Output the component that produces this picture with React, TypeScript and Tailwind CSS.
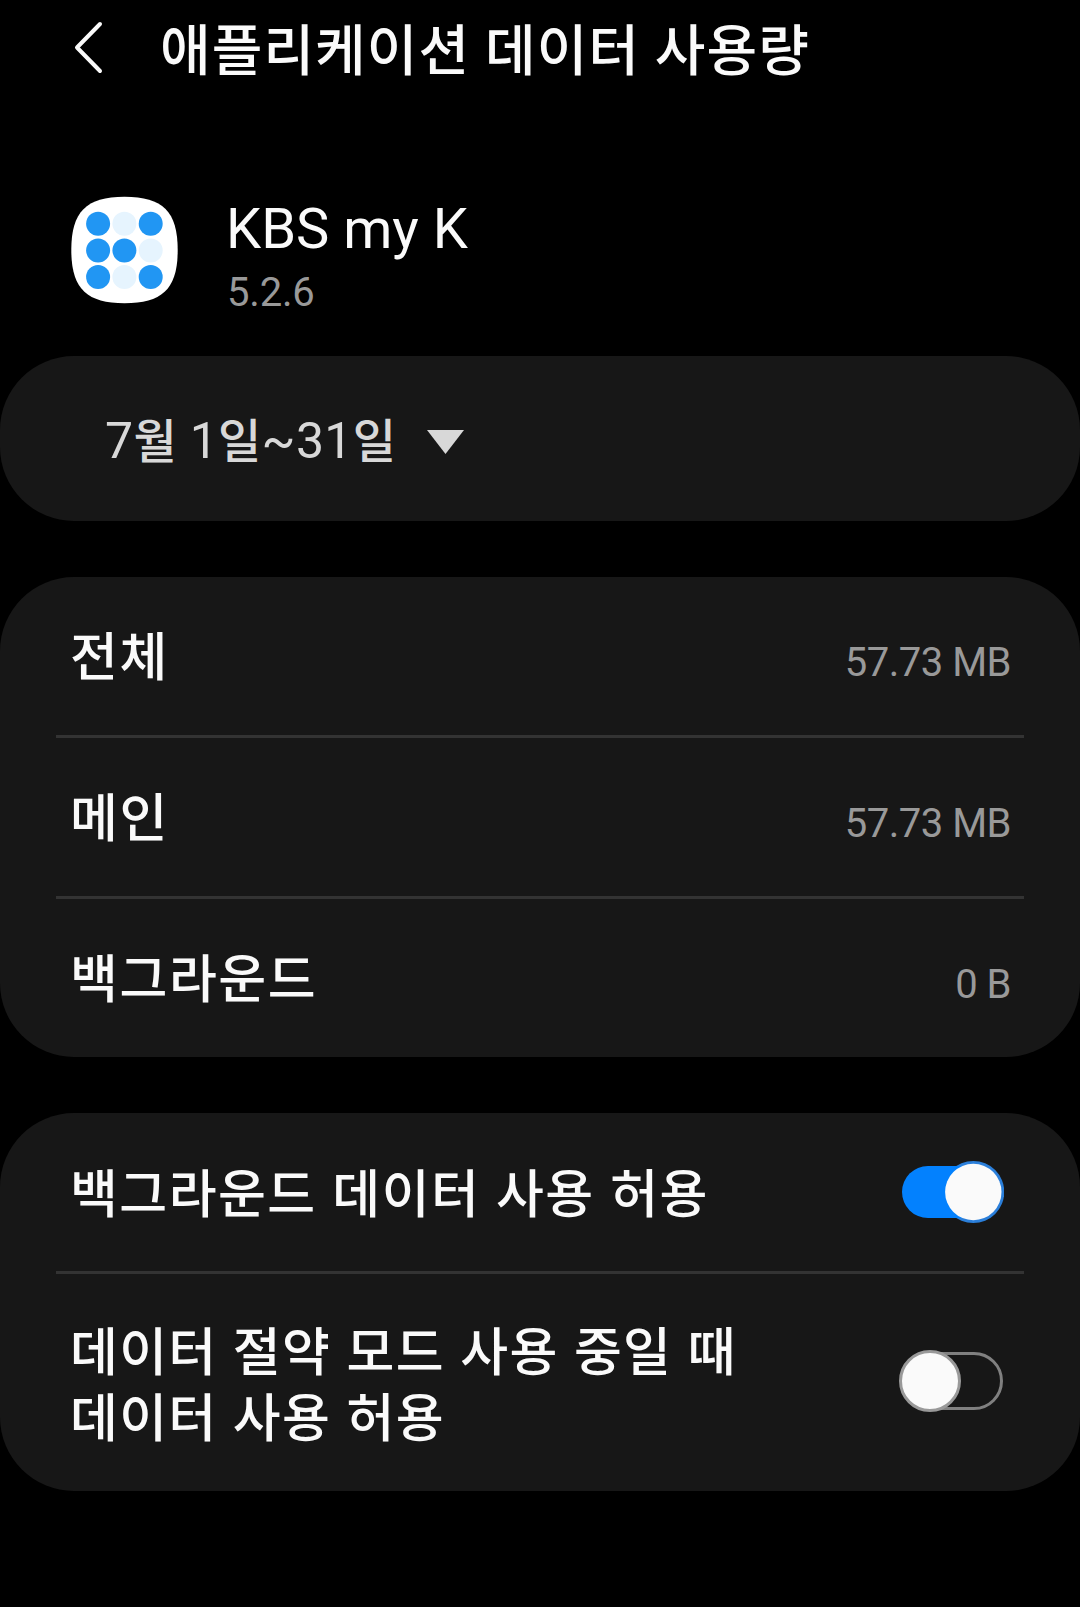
import React, { useState } from 'react';

interface SwitchProps {
  checked: boolean;
  label: string;
  onChange: () => void;
}

const Switch: React.FC<SwitchProps> = ({ checked, label, onChange }) => (
  <button type="button" role="switch" aria-checked={checked} aria-label={label} onClick={onChange} className="shrink-0">
    <svg width="106" height="64" viewBox="0 0 106 64" fill="none">
      {checked ? (
        <>
          <circle cx="75.3" cy="32" r="31" fill="#2b7fda" />
          <path d="M72 6H30A26 26 0 0 0 30 58H72Z" fill="#0381fe" />
          <circle cx="75.3" cy="32" r="28.2" fill="#fafafa" />
        </>
      ) : (
        <>
          <rect x="6" y="4.5" width="97.5" height="55" rx="27.5" stroke="#808080" strokeWidth="3" />
          <circle cx="32" cy="32" r="29.5" fill="#fafafa" stroke="#999999" strokeWidth="3" />
        </>
      )}
    </svg>
  </button>
);

const usage = [
  { name: '전체', value: '57.73 MB' },
  { name: '메인', value: '57.73 MB' },
  { name: '백그라운드', value: '0 B' },
];

// true = solid dot, false = faded dot
const dots = [true, false, true, true, true, false, true, false, true];

const App: React.FC = () => {
  const [background, setBackground] = useState(true);
  const [saver, setSaver] = useState(false);

  return (
    <div className="h-[1607px] w-[1080px] overflow-hidden bg-black font-['Roboto','Noto_Sans_CJK_KR',sans-serif] text-[#fafafa]">
      <header className="flex h-24 items-center pl-[72px]">
        <svg width="32" height="54" viewBox="0 0 32 54" fill="none" stroke="#fafafa" strokeWidth="4">
          <path d="M28 3L5 26.5L28 50" strokeLinecap="round" strokeLinejoin="round" />
        </svg>
        <h1 className="ml-[56px] pt-[5px] text-[55px] leading-[80px] font-medium tracking-[1.1px] whitespace-nowrap">애플리케이션 데이터 사용량</h1>
      </header>

      <section className="flex h-[260px] items-start pt-[100px] pl-[71px]">
        <svg width="107" height="108" viewBox="0 0 107 108">
          <path d="M53.5 0.7C92 0.7 106.7 15.7 106.7 54S92 107.2 53.5 107.2S0.3 92 0.3 54S15 0.7 53.5 0.7Z" fill="#fff" />
          {dots.map((solid, i) => (
            <circle key={i} cx={27.1 + (i % 3) * 26.3} cy={27.8 + Math.floor(i / 3) * 26.6} r="12" fill={solid ? '#2196f3' : '#e6f4fe'} />
          ))}
        </svg>
        <div className="ml-[48px] pt-px">
          <h2 className="text-[56px] leading-[64px]">KBS my K</h2>
          <p className="pl-px text-[40px] leading-[64px] tracking-[-0.2px] text-[#999999]">5.2.6</p>
        </div>
      </section>

      <section className="flex h-[165px] items-center rounded-[74px] bg-[#171717] pt-1.5 pl-[105px] text-[#d8d8d8]">
        <span className="text-[50px] tracking-[0.3px]">
          7<span className="text-[47px] font-medium">월</span> 1<span className="text-[47px] font-medium">일</span>~31
          <span className="text-[47px] font-medium">일</span>
        </span>
        <svg className="ml-[31px]" width="37" height="24" viewBox="0 0 37 24" fill="currentColor">
          <path d="M0 0H37L18.5 24Z" />
        </svg>
      </section>

      <section className="mt-14 h-[480px] rounded-[74px] bg-[#171717] px-14">
        {usage.map((item) => (
          <div key={item.name} className="flex h-[161px] items-center justify-between border-b-3 border-[#333333] px-[13px] last:h-[158px] last:border-b-0">
            <span className="pt-1.5 pl-px text-[52px] font-medium tracking-[1.6px]">{item.name}</span>
            <span className="pt-3.5 text-[40px] tracking-[-0.5px] text-[#999999]">{item.value}</span>
          </div>
        ))}
      </section>

      <section className="mt-14 h-[378px] rounded-[74px] bg-[#171717] px-14">
        <div className="flex h-[161px] items-center justify-between border-b-3 border-[#333333] pr-5 pl-[14px]">
          <span className="pt-2 text-[52px] font-medium tracking-[1.5px] [word-spacing:1.2px]">백그라운드 데이터 사용 허용</span>
          <Switch checked={background} label="백그라운드 데이터 사용 허용" onChange={() => setBackground(!background)} />
        </div>
        <div className="flex h-[214px] items-center justify-between pr-5 pl-[14px]">
          <span className="pt-[11px] text-[52px] leading-[66px] font-medium tracking-[1.3px] [word-spacing:1.2px]">
            데이터 절약 모드 사용 중일 때
            <br />
            데이터 사용 허용
          </span>
          <Switch checked={saver} label="데이터 절약 모드 사용 중일 때 데이터 사용 허용" onChange={() => setSaver(!saver)} />
        </div>
      </section>
    </div>
  );
};

export default App;
